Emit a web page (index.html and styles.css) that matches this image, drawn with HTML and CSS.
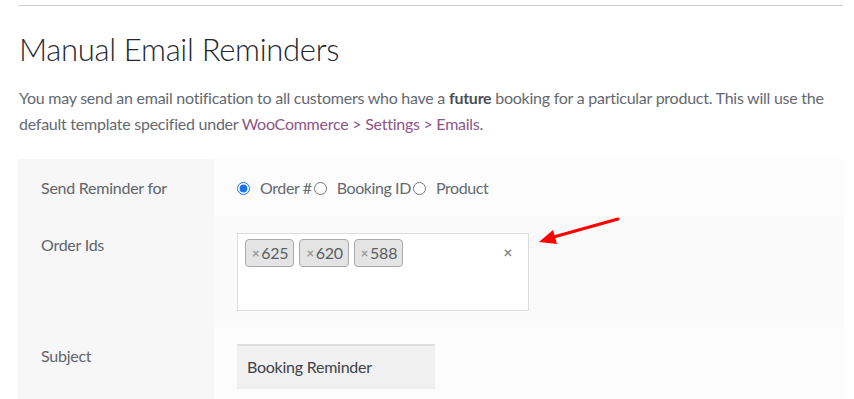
FILE: index.html
```html
<!DOCTYPE html>
<html lang="en">
<head>
<meta charset="utf-8">
<title>Manual Email Reminders</title>
<link rel="stylesheet" href="styles.css">
</head>
<body>
<div class="wrap">
  <hr class="rule">
  <h1 class="title">Manual Email Reminders</h1>
  <p class="intro">You may send an email notification to all customers who have a <strong>future</strong> booking for a particular product. This will use the default template specified under <a href="#" class="link">WooCommerce &gt; Settings &gt; Emails</a>.</p>
  <table class="form">
    <tr class="row row-a">
      <th class="label">Send Reminder for</th>
      <td class="value">
        <div class="radios">
          <label class="opt"><input type="radio" name="for" checked><span class="opt-text">Order #</span></label><label class="opt"><input type="radio" name="for"><span class="opt-text">Booking ID</span></label><label class="opt"><input type="radio" name="for"><span class="opt-text">Product</span></label>
        </div>
      </td>
    </tr>
    <tr class="row row-b">
      <th class="label">Order Ids</th>
      <td class="value">
        <div class="select">
          <ul class="tags">
            <li class="tag"><span class="tag-x">×</span>625</li>
            <li class="tag"><span class="tag-x">×</span>620</li>
            <li class="tag"><span class="tag-x">×</span>588</li>
          </ul>
          <span class="clear">×</span>
        </div>
      </td>
    </tr>
    <tr class="row row-a">
      <th class="label">Subject</th>
      <td class="value">
        <div class="input">Booking Reminder</div>
      </td>
    </tr>
  </table>
  <svg class="arrow" width="100" height="40" viewBox="0 0 100 40">
    <line x1="98" y1="3" x2="30" y2="22" stroke="#f00" stroke-width="3" stroke-linecap="round"/>
    <polygon points="19,26 33,14 37,28" fill="#f00"/>
  </svg>
</div>
</body>
</html>
```
FILE: styles.css
```css
* { box-sizing: border-box; }
html, body { margin: 0; padding: 0; background: #fff; }
body { font-family: Lato, "Source Sans Pro", sans-serif; font-size: 16px; letter-spacing: -0.25px; color: #646970; }
.wrap { position: relative; padding: 5px 11px 0 18px; width: 854px; height: 399px; overflow: hidden; }
.rule { margin: 0; border: 0; border-top: 1px solid #cfcfcf; height: 0; }
.title { margin: 25px 0 0 1px; font-weight: 300; font-size: 31px; line-height: 36px; color: #23282d; letter-spacing: -0.3px; }
.intro { margin: 18px 0 0 1px; font-size: 16px; line-height: 26px; color: #646970; }
.intro strong { color: #4a4f55; font-weight: 700; }
.link { color: #8e5486; text-decoration: none; }
.form { margin-top: 22px; border-collapse: collapse; width: 826px; }
.label { width: 196px; background: #f7f7f7; text-align: left; font-weight: 400; color: #60646a; padding: 17px 10px 16px 23px; vertical-align: top; line-height: 24px; }
.value { padding: 17px 23px 16px 23px; vertical-align: top; line-height: 24px; }
.row-a .value { background: #fcfcfc; }
.row-b .value { background: #fafafa; }
.radios { display: flex; align-items: center; color: #646970; }
.opt { display: flex; align-items: center; }
.opt input { margin: 0; width: 13px; height: 13px; accent-color: #1a73e8; }
.opt-text { margin-left: 10px; margin-right: 2px; letter-spacing: -0.4px; }
.select { position: relative; width: 292px; height: 78px; background: #fff; border: 1px solid #dcdcdc; padding: 5px 7px; }
.tags { list-style: none; margin: 0; padding: 0; display: flex; gap: 5px; }
.tag { height: 28px; padding: 0 5px 0 6px; border: 1px solid #aaa; border-radius: 4px; background: #e4e4e4; color: #5a5e63; line-height: 26px; display: flex; align-items: center; }
.tag-x { color: #999; font-weight: 700; font-size: 13px; margin-right: 2px; }
.clear { position: absolute; right: 16px; top: 6px; color: #888; font-weight: 700; font-size: 15px; }
.input { width: 198px; height: 45px; background: #f0f0f0; border-top: 2px solid #dedede; padding: 0 10px; line-height: 41px; color: #3c434a; }
.arrow { position: absolute; left: 520px; top: 216px; }
```
